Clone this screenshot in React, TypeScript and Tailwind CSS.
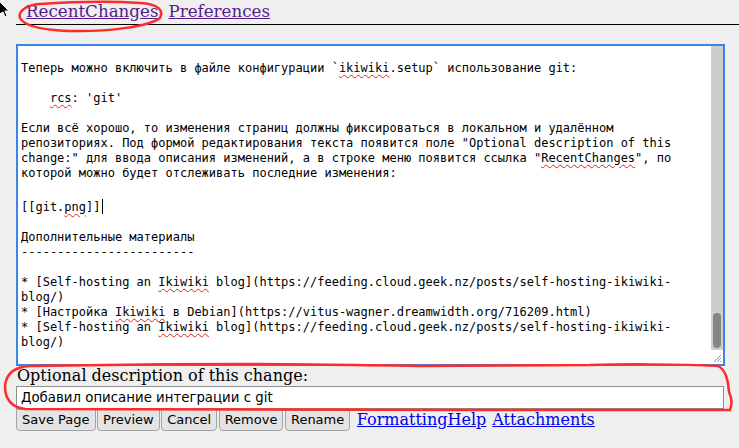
import React from 'react'

const mono = "font-['DejaVu_Sans_Mono','Liberation_Mono',monospace]"

function Squiggle({ children }: { children: React.ReactNode }) {
  return <span className="underline decoration-wavy decoration-[#e02020] decoration-1 underline-offset-2">{children}</span>
}

function Scrollbar() {
  return (
    <div className="flex w-[12px] flex-col">
      <div className="flex flex-1 flex-col justify-end bg-[#cdcdcd] px-[2px] pb-[2px]">
        <div className="h-[35px] rounded-full bg-[#868686]" />
      </div>
      <div className="relative h-[14px] bg-white">
        <svg className="absolute bottom-[1px] right-[1px]" width="10" height="10" viewBox="0 0 10 10">
          <path d="M9 2 L2 9 M9 5 L5 9 M9 8 L8 9" stroke="#9a9a9a" strokeWidth="1" />
        </svg>
      </div>
    </div>
  )
}

export default function App() {
  return (
    <div className="relative h-[448px] w-[739px] overflow-hidden bg-[#efefef] font-['DejaVu_Serif',serif] text-black">
      {/* top links */}
      <div className="flex h-[24px] items-end gap-[10px] pb-[2px] pl-[26px] text-[16.7px] leading-[22px]">
        <a href="#" className="text-[#551a8b] underline">RecentChanges</a>
        <a href="#" className="text-[#551a8b] underline">Preferences</a>
      </div>
      <div className="ml-[16px] border-t border-black" />

      <div className="px-[16px] pt-[19px]">
        {/* editor */}
        <div className="flex h-[322px] w-[709px] border-2 border-[#3b86e4] bg-white">
          <div className={`flex-1 overflow-hidden pl-[3px] text-[12px] leading-[15px] whitespace-pre ${mono}`}>
            {'\n'}
            Теперь можно включить в файле конфигурации `<Squiggle>ikiwiki</Squiggle>.setup` использование git:{'\n'}
            {'\n'}
            {'    '}<Squiggle>rcs</Squiggle>: 'git'{'\n'}
            {'\n'}
            Если всё хорошо, то изменения страниц должны фиксироваться в локальном и удалённом{'\n'}
            репозиториях. Под формой редактирования текста появится поле "Optional description of this{'\n'}
            change:" для ввода описания изменений, а в строке меню появится ссылка "<Squiggle>RecentChanges</Squiggle>", по{'\n'}
            которой можно будет отслеживать последние изменения:{'\n'}
            {'\n'}
            [[git.<Squiggle>png</Squiggle>]]<span className="ml-[1px] inline-block h-[15px] w-px translate-y-[3px] bg-black" />{'\n'}
            {'\n'}
            Дополнительные материалы{'\n'}
            ------------------------{'\n'}
            {'\n'}
            * [Self-hosting an <Squiggle>Ikiwiki</Squiggle> blog](https://feeding.cloud.geek.nz/posts/self-hosting-ikiwiki-{'\n'}
            blog/){'\n'}
            * [Настройка <Squiggle>Ikiwiki</Squiggle> в Debian](https://vitus-wagner.dreamwidth.org/716209.html){'\n'}
            * [Self-hosting an <Squiggle>Ikiwiki</Squiggle> blog](https://feeding.cloud.geek.nz/posts/self-hosting-ikiwiki-{'\n'}
            blog/)
          </div>
          <Scrollbar />
        </div>

        {/* description */}
        <div className="pl-[1px] text-[16px] leading-[20px]">Optional description of this change:</div>
        <div className="flex h-[23px] w-[708px] items-center border border-[#8f8f8f] bg-white pl-[4px] font-['DejaVu_Sans',sans-serif] text-[13.33px]">
          Добавил описание интеграции с git
        </div>

        {/* buttons */}
        <div className="flex items-center gap-[1.5px] font-['DejaVu_Sans',sans-serif] text-[13px]">
          {['Save Page', 'Preview', 'Cancel', 'Remove', 'Rename'].map((label) => (
            <button
              key={label}
              className="h-[22px] rounded-b-[4px] border border-[#a3a3a3] bg-[#e4e4e4] px-[5px] leading-[20px]"
            >
              {label}
            </button>
          ))}
          <div className="ml-[5px] flex gap-[6px] font-['DejaVu_Serif',serif] text-[16px] leading-[22px]">
            <a href="#" className="text-[#0000ee] underline">FormattingHelp</a>
            <a href="#" className="text-[#0000ee] underline">Attachments</a>
          </div>
        </div>
      </div>

      {/* mouse cursor */}
      <svg className="absolute left-0 top-0" width="12" height="18" viewBox="0 0 12 18">
        <path d="M-2 0 L9 11 L5 11 L7 16 L5 17 L3 12 L-2 15 Z" fill="#000" stroke="#fff" strokeWidth="1" />
      </svg>

      {/* red annotations */}
      <svg className="pointer-events-none absolute left-0 top-0" width="739" height="448" viewBox="0 0 739 448">
        <path
          d="M40 4 C25 5 18 12 20 18 C24 26 40 30 70 31 C110 32 150 26 160 18 C164 10 158 4 140 3 C110 1 70 2 40 4"
          fill="none"
          stroke="#ff2a2a"
          strokeWidth="2.5"
          strokeLinecap="round"
        />
        <path
          d="M250 364 C180 364 80 365 30 366 C12 367 6 375 5 386 C5 398 10 407 25 409 C150 410 500 410 730 410 C733 402 731 396 729 392 C728 380 726 370 718 366 C680 364 620 364 590 365 C540 365 480 366 420 366 C360 365 300 364 250 364"
          fill="none"
          stroke="#ff2a2a"
          strokeWidth="2.5"
          strokeLinecap="round"
        />
      </svg>
    </div>
  )
}
